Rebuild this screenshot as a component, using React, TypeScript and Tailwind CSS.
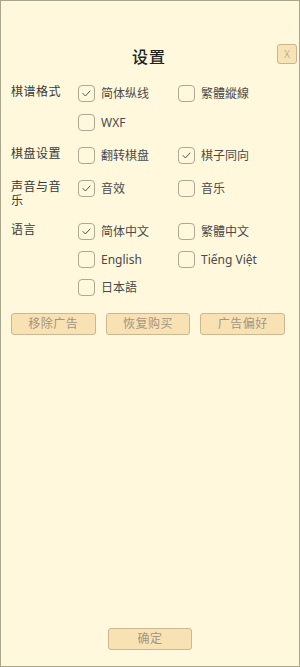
import React, { useState } from 'react';

type Option = { id: string; label: string };

const Checkbox = ({ checked, label, onClick }: { checked: boolean; label: string; onClick: () => void }) => (
  <button onClick={onClick} className="flex items-center h-[20px] gap-[6px] text-left">
    <span className="w-[17px] h-[17px] shrink-0 rounded-[4px] border border-[#b0a890] flex items-center justify-center">
      {checked && (
        <svg width="9" height="7" viewBox="0 0 9 7" fill="none">
          <polyline points="1,3.5 3.4,6 8,1" stroke="#555" strokeWidth="1" strokeLinecap="round" strokeLinejoin="round" />
        </svg>
      )}
    </span>
    <span className="text-[12px] leading-[14px] text-[#4a4a4a] whitespace-nowrap pt-[1px]">{label}</span>
  </button>
);

const Section = ({
  title,
  options,
  selected,
  toggle,
  rowGap = 'gap-y-[9px]',
}: {
  title: string;
  options: Option[];
  selected: string[];
  toggle: (id: string) => void;
  rowGap?: string;
}) => (
  <div className="flex items-start">
    <div className="w-[55px] mr-[12px] pt-[2px] text-[12px] leading-[14px] text-[#383838] tracking-[0.5px]">{title}</div>
    <div className={`grid grid-cols-[100px_100px] ${rowGap}`}>
      {options.map((o) => (
        <Checkbox key={o.id} label={o.label} checked={selected.includes(o.id)} onClick={() => toggle(o.id)} />
      ))}
    </div>
  </div>
);

const App = () => {
  const [selected, setSelected] = useState<string[]>(['simple', 'sameDir', 'sfx', 'zhs']);

  const toggle = (id: string) =>
    setSelected((s) => (s.includes(id) ? s.filter((x) => x !== id) : [...s, id]));

  return (
    <div
      className="min-h-screen w-full bg-[#fff8dc] border border-[#aaa68e] flex flex-col"
      style={{ fontFamily: '"Noto Sans", "Noto Sans CJK SC", sans-serif' }}
    >
      {/* header */}
      <div className="grid grid-cols-[1fr_auto_1fr] items-start pt-[43px] pr-[2px]">
        <div />
        <h1 className="text-[16px] leading-[26px] font-medium text-[#222] tracking-[1px]">设置</h1>
        <button className="justify-self-end w-[20px] h-[20px] rounded-[3px] bg-[#f8e3b4] border border-[#c9b68e] flex items-center justify-center text-[10px] font-light leading-none text-[#9a958c]">
          X
        </button>
      </div>

      {/* settings */}
      <div className="px-[10px] mt-[13px] flex flex-col gap-y-[13px]">
        <Section
          title="棋谱格式"
          selected={selected}
          toggle={toggle}
          options={[
            { id: 'simple', label: '简体纵线' },
            { id: 'trad', label: '繁體縱線' },
            { id: 'wxf', label: 'WXF' },
          ]}
        />
        <Section
          title="棋盘设置"
          selected={selected}
          toggle={toggle}
          options={[
            { id: 'flip', label: '翻转棋盘' },
            { id: 'sameDir', label: '棋子同向' },
          ]}
        />
        <Section
          title="声音与音乐"
          selected={selected}
          toggle={toggle}
          options={[
            { id: 'sfx', label: '音效' },
            { id: 'music', label: '音乐' },
          ]}
        />
        <Section
          title="语言"
          selected={selected}
          toggle={toggle}
          rowGap="gap-y-[8px]"
          options={[
            { id: 'zhs', label: '简体中文' },
            { id: 'zht', label: '繁體中文' },
            { id: 'en', label: 'English' },
            { id: 'vi', label: 'Tiếng Việt' },
            { id: 'ja', label: '日本語' },
          ]}
        />

        <div className="grid grid-cols-3 w-[274px] gap-x-[10px] mt-[3px]">
          {['移除广告', '恢复购买', '广告偏好'].map((t) => (
            <button
              key={t}
              className="h-[22px] rounded-[3px] bg-[#f8e2b3] border border-[#cbb790] text-[12px] text-[#a29684] tracking-[0.5px]"
            >
              {t}
            </button>
          ))}
        </div>
      </div>

      {/* footer */}
      <div className="mt-auto pb-[16px] flex justify-center">
        <button className="w-[84px] h-[22px] rounded-[3px] bg-[#f8e2b3] border border-[#cbb790] text-[12px] text-[#a29684] tracking-[0.5px]">
          确定
        </button>
      </div>
    </div>
  );
};

export default App;
